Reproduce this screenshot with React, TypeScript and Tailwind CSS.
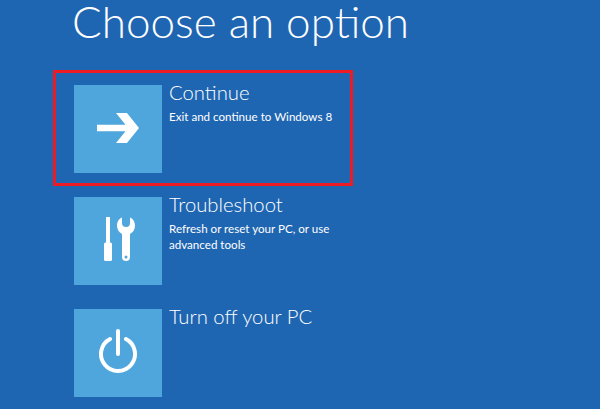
const FONT = "font-['Lato','Open_Sans',sans-serif]";

function ArrowIcon() {
  return (
    <svg width="42" height="32" viewBox="0 0 42 32" fill="#fff" aria-hidden="true">
      <polygon points="19,0 30,0 42,15 30,30 19,30 28.500,18.250 0,18.250 0,11.750 28.500,11.750" />
    </svg>
  );
}

function ToolsIcon() {
  return (
    <svg width="34" height="48" viewBox="0 0 34 48" fill="#fff" aria-hidden="true">
      <path d="M5 0h4v26H5z" />
      <path d="M3 27a1.500 1.500 0 0 1 1.500-1.500h5A1.500 1.500 0 0 1 11 27v15.500A1.500 1.500 0 0 1 9.500 44h-5A1.500 1.500 0 0 1 3 42.500z" />
      <path
        fillRule="evenodd"
        d="M21 .5V6a4 4 0 0 0 8 0V.5C32 1.500 34 5 34 8.500c0 4-2 7-5 8.500v23a4 4 0 0 1-8 0V17c-3-1.500-5-4.500-5-8.500C16 5 18 1.500 21 .5zM25 38.500a1.500 1.500 0 1 0 0 3 1.500 1.500 0 0 0 0-3z"
      />
    </svg>
  );
}

function PowerIcon() {
  return (
    <svg width="40" height="48" viewBox="0 0 40 48" fill="none" stroke="#fff" strokeWidth="4" strokeLinecap="round" aria-hidden="true">
      <path d="M20 2v23" />
      <path d="M12 10A17 17 0 1 0 28 10" />
    </svg>
  );
}

function Option({ icon, title, desc }: { icon: React.ReactNode; title: string; desc?: string }) {
  return (
    <div className="flex h-[88px]">
      <div className="flex h-[88px] w-[88px] shrink-0 items-center justify-center bg-[#4fa6dd]">{icon}</div>
      <div className="ml-[7px] w-[172px] text-white">
        <div className="mt-[-3px] text-[20.300px] leading-[20px] font-light whitespace-nowrap">{title}</div>
        {desc && <div className="mt-[7px] text-[11.600px] leading-[16px] whitespace-pre-line">{desc}</div>}
      </div>
    </div>
  );
}

export default function App() {
  return (
    <div className={`${FONT} relative h-[409px] w-[600px] overflow-hidden bg-[#1f66b2] pl-[74px]`}>
      <h1 className="ml-[-2px] h-[85px] text-[44px] leading-[42px] font-light text-white whitespace-nowrap">Choose an option</h1>
      <div className="flex flex-col gap-[24px]">
        <div className="relative">
          <Option icon={<ArrowIcon />} title="Continue" desc="Exit and continue to Windows 8" />
          <div className="absolute left-[-21px] top-[-15px] h-[116px] w-[300px] border-[3px] border-[#ed1c24]" />
        </div>
        <Option icon={<ToolsIcon />} title="Troubleshoot" desc={"Refresh or reset your PC, or use\nadvanced tools"} />
        <Option icon={<PowerIcon />} title="Turn off your PC" />
      </div>
    </div>
  );
}
